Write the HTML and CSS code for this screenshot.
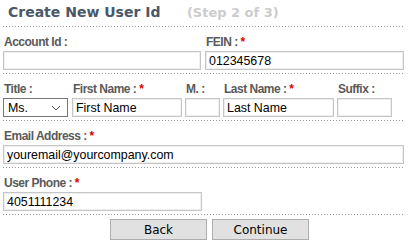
FILE: index.html
```html
<!DOCTYPE html>
<html>
<head>
<meta charset="utf-8">
<link rel="stylesheet" href="styles.css">
</head>
<body>
<div class="page">
  <div class="header section">
    <span class="title">Create New User Id</span>
    <span class="step">(Step 2 of 3)</span>
  </div>
  <div class="section row1">
    <div class="field">
      <div class="label">Account Id :</div>
      <input class="inp w-half" type="text" value="">
    </div>
    <div class="field">
      <div class="label">FEIN : <span class="req">*</span></div>
      <input class="inp w-half2" type="text" value="012345678">
    </div>
  </div>
  <div class="section row2">
    <div class="field">
      <div class="label">Title :</div>
      <div class="select"><span>Ms.</span><svg width="10" height="6" viewBox="0 0 10 6"><path d="M1 1 L5 5 L9 1" fill="none" stroke="#555" stroke-width="1"/></svg></div>
    </div>
    <div class="field">
      <div class="label">First Name : <span class="req">*</span></div>
      <input class="inp w-first" type="text" value="First Name">
    </div>
    <div class="field">
      <div class="label">M. :</div>
      <input class="inp w-m" type="text" value="">
    </div>
    <div class="field">
      <div class="label">Last Name : <span class="req">*</span></div>
      <input class="inp w-last" type="text" value="Last Name">
    </div>
    <div class="field">
      <div class="label">Suffix :</div>
      <input class="inp w-suffix" type="text" value="">
    </div>
  </div>
  <div class="section">
    <div class="field">
      <div class="label">Email Address : <span class="req">*</span></div>
      <input class="inp w-full" type="text" value="youremail@yourcompany.com">
    </div>
  </div>
  <div class="section">
    <div class="field">
      <div class="label">User Phone : <span class="req">*</span></div>
      <input class="inp w-phone" type="text" value="4051111234">
    </div>
  </div>
  <div class="buttons">
    <button class="btn">Back</button>
    <button class="btn">Continue</button>
  </div>
</div>
</body>
</html>
```

FILE: styles.css
```css
html, body {
  margin: 0;
  padding: 0;
  background: #fff;
}
.page {
  width: 409px;
  font-family: "Liberation Sans", Arial, sans-serif;
}
.section {
  margin: 0 4px 0 3px;
  padding-top: 8px;
  padding-bottom: 4px;
  background-image: linear-gradient(to right, #999 1px, transparent 1px);
  background-size: 3px 1px;
  background-repeat: repeat-x;
  background-position: 0 100%;
}
.header {
  height: 24px;
  padding: 3px 0 0 5px;
  white-space: nowrap;
}
.header.section { padding-top: 3px; padding-bottom: 0; }
.title {
  font-family: "DejaVu Sans", Verdana, sans-serif;
  font-weight: bold;
  font-size: 14px;
  color: #4a5868;
}
.step {
  font-family: "DejaVu Sans", Verdana, sans-serif;
  font-weight: bold;
  font-size: 13px;
  color: #cccccc;
  margin-left: 22px;
}
.row1, .row2 {
  display: flex;
}
.row1 { gap: 4px; }
.row2 { gap: 3px; }
.field {
  display: flex;
  flex-direction: column;
}
.label {
  font-size: 12px;
  letter-spacing: -0.5px;
  font-weight: bold;
  color: #5a5a5a;
  line-height: 14px;
  height: 14px;
  padding-left: 1px;
  margin-bottom: 2px;
  white-space: nowrap;
}
.req {
  color: #e00000;
}
.inp {
  box-sizing: border-box;
  height: 19px;
  margin: 0;
  border: 1px solid #c6c6c6;
  box-shadow: inset 0 0 0 1px #efefef;
  padding: 0 0 0 3px;
  font-family: "Liberation Sans", Arial, sans-serif;
  font-size: 12.4px;
  color: #000;
  outline: none;
}
.w-half { width: 198px; }
.w-half2 { width: 199px; }
.w-first { width: 110px; }
.w-m { width: 35px; }
.w-last { width: 111px; }
.w-suffix { width: 55px; }
.w-full { width: 401px; }
.w-phone { width: 199px; }
.select {
  box-sizing: border-box;
  width: 65px;
  height: 19px;
  border: 1px solid #767676;
  display: flex;
  align-items: center;
  justify-content: space-between;
  padding: 0 6px 0 4px;
  font-size: 12.4px;
  color: #000;
  margin-right: 1px;
}
.buttons {
  display: flex;
  gap: 5px;
  padding: 4px 0 0 110px;
}
.btn {
  box-sizing: border-box;
  width: 97px;
  height: 21px;
  margin: 0;
  background: #e1e1e1;
  border: 1px solid #adadad;
  font-family: "DejaVu Sans", Tahoma, sans-serif;
  font-size: 12px;
  color: #000;
  padding: 0;
}
```
